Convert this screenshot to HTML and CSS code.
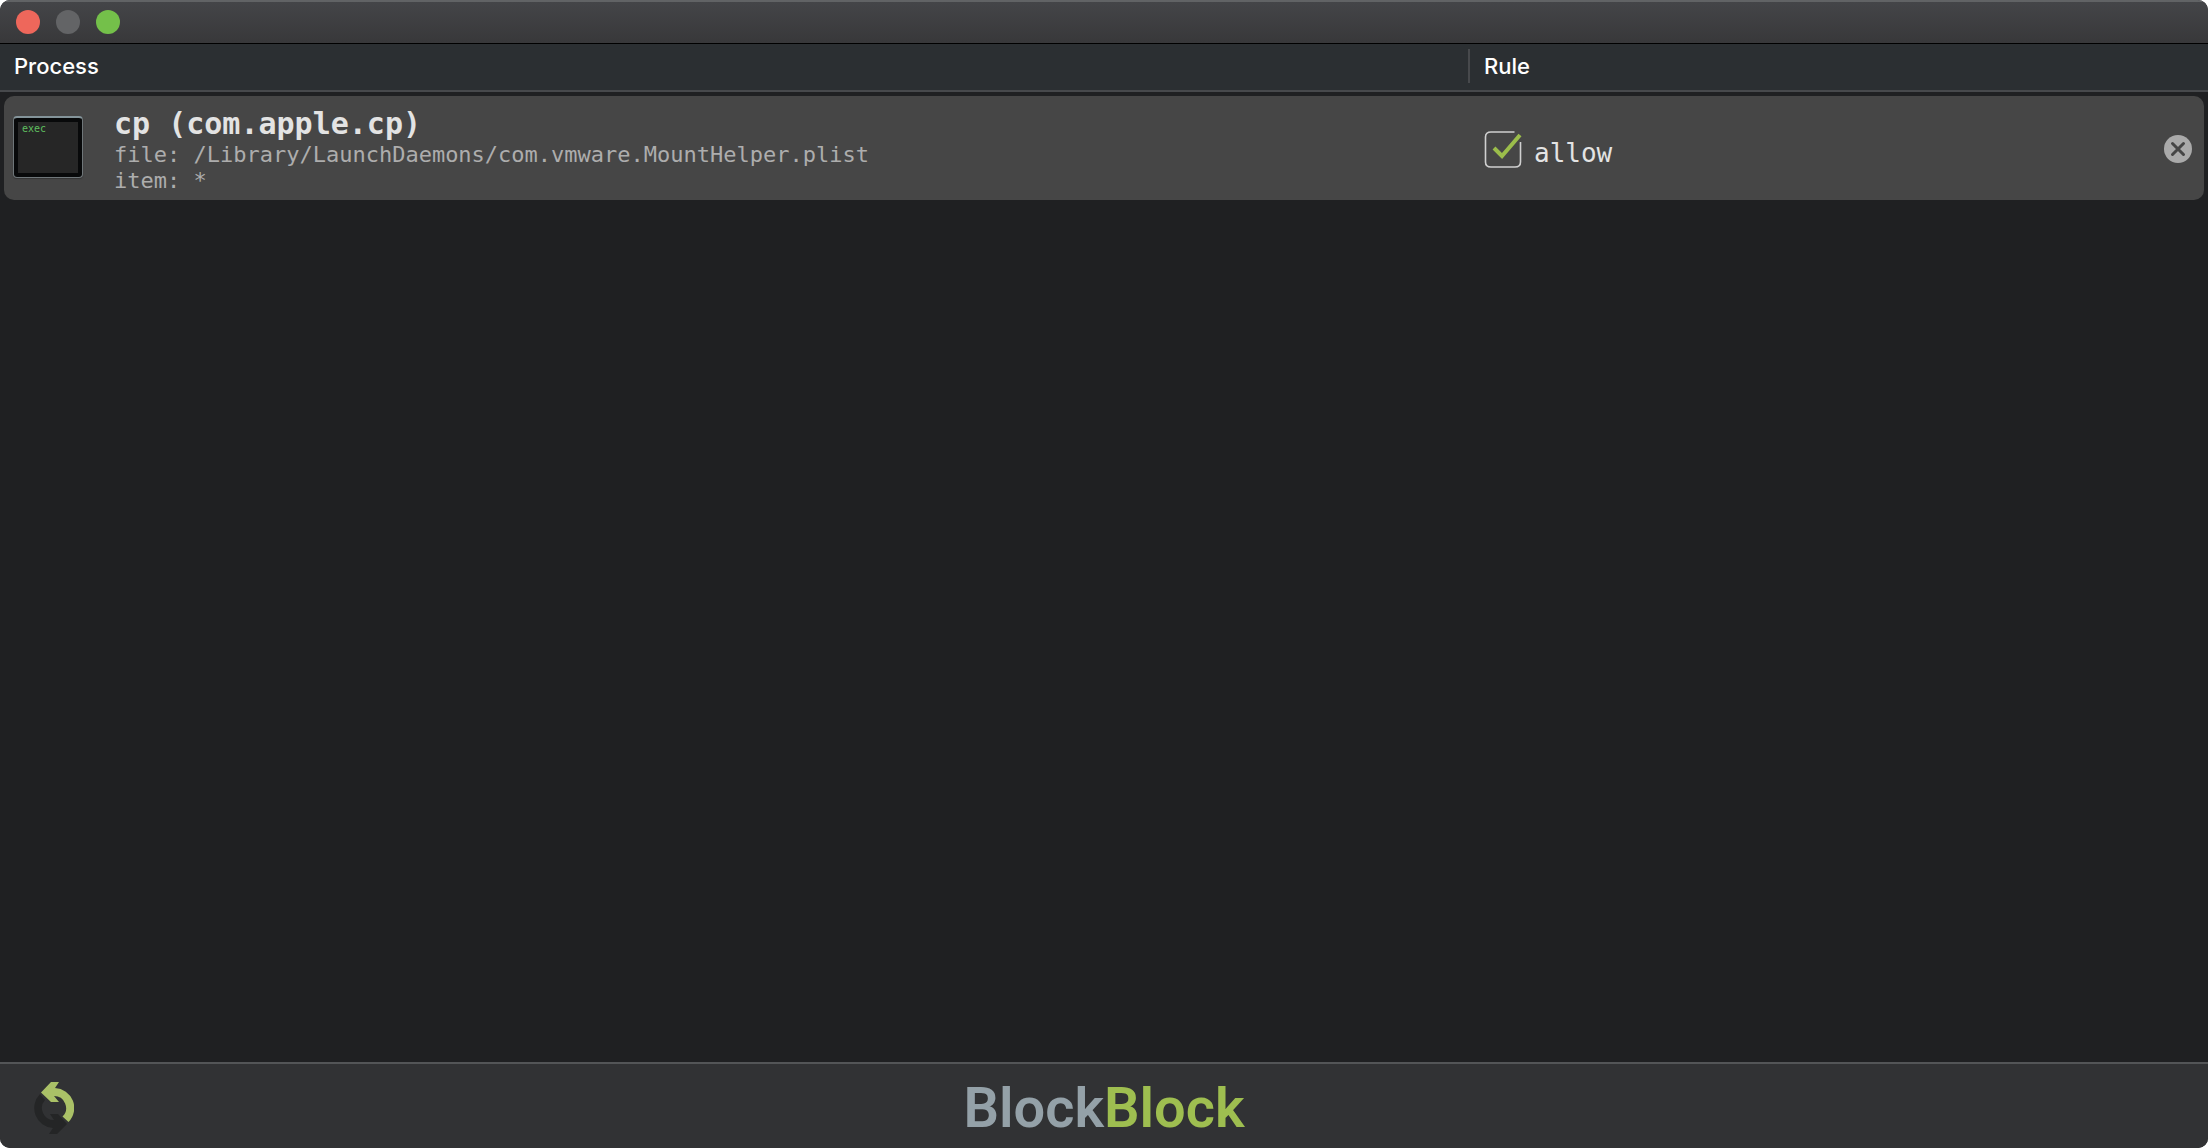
FILE: index.html
```html
<!DOCTYPE html>
<html lang="en">
<head>
<meta charset="utf-8">
<title>BlockBlock Rules</title>
<link rel="stylesheet" href="styles.css">
</head>
<body>
<div class="window">
  <header class="titlebar">
    <button class="light light-close" type="button" aria-label="Close window"></button>
    <button class="light light-minimize" type="button" aria-label="Minimize window" disabled></button>
    <button class="light light-zoom" type="button" aria-label="Zoom window"></button>
  </header>

  <main class="content">
    <table class="rules">
      <thead>
        <tr>
          <th class="col-process" scope="col">Process</th>
          <th class="col-rule" scope="col"><span class="divided">Rule</span></th>
        </tr>
      </thead>
      <tbody>
        <tr>
          <td>
            <div class="process">
              <div class="exec-icon">exec</div>
              <div class="details">
                <div class="name">cp (com.apple.cp)</div>
                <div class="detail">file: /Library/LaunchDaemons/com.vmware.MountHelper.plist</div>
                <div class="detail">item: *</div>
              </div>
            </div>
          </td>
          <td>
            <div class="rule">
              <label class="allow" for="allow-cp">
                <span class="tick">
                  <input id="allow-cp" type="checkbox" checked>
                  <svg viewBox="0 0 38 38" aria-hidden="true">
                    <path class="tick-box" d="M30.500 2H7Q1.500 2 1.500 7V32Q1.500 37 7 37H31Q36.500 37 36.500 32V12"/>
                    <path class="tick-mark" d="M10 18L18 26L36 5"/>
                  </svg>
                </span>
                <span>allow</span>
              </label>
              <button class="delete" type="button" aria-label="Delete rule">
                <svg viewBox="0 0 28 28" aria-hidden="true"><path d="M8.500 8.500L19.500 19.500M19.500 8.500L8.500 19.500"/></svg>
              </button>
            </div>
          </td>
        </tr>
      </tbody>
    </table>
  </main>

  <footer class="footer">
    <button class="refresh" type="button" aria-label="Refresh rules">
      <svg viewBox="0 0 40 52" aria-hidden="true">
        <path fill="#242526" d="M6 12A20 20 0 0 0 19 46L15 52H23L33 42L24 32H16L20 38A12 12 0 0 1 11 18Z"/>
        <path fill="#aac167" d="M7 10.500L17 0H25L21 6A20 20 0 0 1 34.500 40L28.500 34.500A12 12 0 0 0 20 14L25 20H17Z"/>
      </svg>
    </button>
    <div class="logo"><span class="logo-first">Block</span><span class="logo-second">Block</span></div>
  </footer>
</div>
</body>
</html>
```

FILE: styles.css
```css
* {
  box-sizing: border-box;
}

body {
  margin: 0;
  background: #fff;
  font-family: "Inter", "Liberation Sans", sans-serif;
}

button {
  padding: 0;
  border: 0;
  background: none;
}

svg {
  display: block;
}

.window {
  display: flex;
  flex-direction: column;
  min-height: 100vh;
  overflow: hidden;
  border-radius: 10px;
  background: #1f2022;
}

.titlebar {
  display: flex;
  align-items: center;
  gap: 16px;
  height: 44px;
  padding: 0 16px 2px;
  border-top: 2px solid #616365;
  border-bottom: 1px solid #000;
  background: linear-gradient(#444548, #38383a);
}

.light {
  width: 24px;
  height: 24px;
  border-radius: 50%;
}

.light-close {
  background: #ee675b;
}

.light-minimize {
  background: #636466;
}

.light-zoom {
  background: #74c04a;
}

.content {
  flex: 1;
}

.rules {
  width: 100%;
  table-layout: fixed;
  border-collapse: separate;
  border-spacing: 0;
}

.rules th {
  height: 48px;
  padding: 0 0 2px 14px;
  border-bottom: 2px solid #47494c;
  background: #2b2f32;
  color: #fff;
  font-size: 22px;
  font-weight: 500;
  line-height: 34px;
  text-align: left;
}

.rules .col-rule {
  width: 740px;
  padding-left: 0;
}

.divided {
  display: block;
  padding-left: 14px;
  border-left: 2px solid #47494c;
}

/* Transparent borders inset the highlighted row from the window edges. */
.rules td {
  height: 112px;
  padding: 0;
  border: 0 solid transparent;
  border-width: 4px 0;
  background: #464646;
  background-clip: padding-box;
}

.rules td:first-child {
  border-left-width: 4px;
  border-radius: 14px 0 0 14px;
}

.rules td:last-child {
  border-right-width: 4px;
  border-radius: 0 14px 14px 0;
}

.process {
  display: flex;
  align-items: center;
  gap: 31px;
  padding-left: 9px;
  font-family: "DejaVu Sans Mono", monospace;
}

.exec-icon {
  width: 70px;
  height: 62px;
  margin-bottom: 2px;
  padding: 3px 8px;
  border: 1px solid #6f7679;
  border-top: 2px solid #84949a;
  border-radius: 4px;
  background: #262626;
  box-shadow: inset 0 0 0 4px #08090a, 0 1px 1px #333;
  color: #5fbf5f;
  font-size: 10px;
  line-height: 16px;
}

.details {
  padding-top: 4px;
}

.name {
  color: #e3e3e3;
  font-size: 30px;
  font-weight: 700;
  line-height: 36px;
}

.detail {
  color: #adadad;
  font-size: 22px;
  line-height: 26px;
}

.rule {
  display: flex;
  align-items: center;
  justify-content: space-between;
  padding: 2px 12px 0 16px;
}

.allow {
  display: flex;
  align-items: flex-end;
  gap: 12px;
  color: #e3e3e3;
  font-family: "DejaVu Sans Mono", monospace;
  font-size: 26px;
  line-height: 30px;
}

.tick {
  display: grid;
  width: 38px;
  height: 38px;
}

.tick input,
.tick svg {
  grid-area: 1 / 1;
  width: 38px;
  height: 38px;
  margin: 0;
}

.tick input {
  appearance: none;
}

.tick svg {
  pointer-events: none;
}

.tick path {
  fill: none;
}

.tick-box {
  stroke: #d0d0d0;
  stroke-width: 1.6;
}

.tick-mark {
  stroke: #9bbd4b;
  stroke-width: 4;
}

.tick input:not(:checked) + svg .tick-mark {
  display: none;
}

.delete {
  width: 28px;
  height: 28px;
  border-radius: 50%;
  background: #aaa;
}

.delete path {
  fill: none;
  stroke: #464646;
  stroke-width: 3;
  stroke-linecap: round;
}

.footer {
  display: grid;
  grid-template-columns: 1fr auto 1fr;
  align-items: center;
  height: 86px;
  padding: 4px 34px 0;
  border-top: 2px solid #535557;
  background: #313234;
}

.refresh {
  justify-self: start;
  width: 40px;
}

.logo {
  font-family: "Roboto", sans-serif;
  font-size: 56px;
  font-weight: 600;
  line-height: 80px;
}

.logo-first {
  color: #94a1a8;
}

.logo-second {
  color: #9ebe50;
}
```
